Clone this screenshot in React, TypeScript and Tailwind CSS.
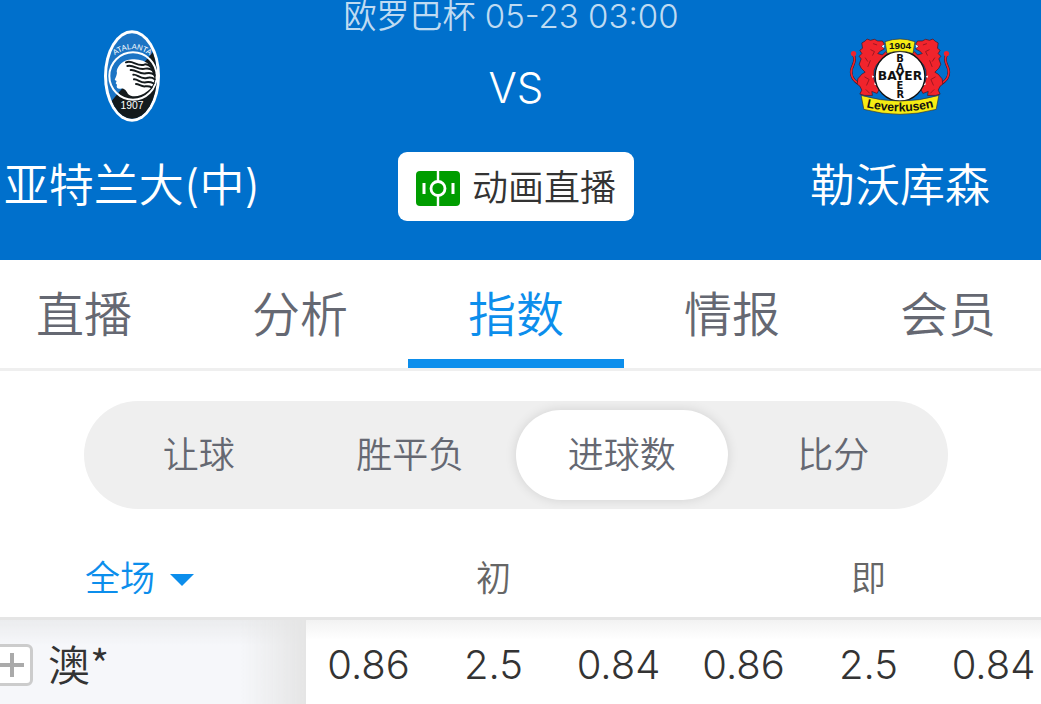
import { useState } from 'react';
import clsx from 'clsx';

const tabs = ['直播', '分析', '指数', '情报', '会员'];
const markets = ['让球', '胜平负', '进球数', '比分'];
const periods = ['全场', '半场'];

const rows = [
  { company: '澳*', early: ['0.86', '2.5', '0.84'], live: ['0.86', '2.5', '0.84'] },
];

function AtalantaLogo() {
  return (
    <svg viewBox="42 30 168 276" className="w-14 h-[92px]" role="img" aria-label="Atalanta">
      <defs>
        <clipPath id="ata-oval">
          <ellipse cx="126" cy="168" rx="75" ry="128" />
        </clipPath>
        <path id="ata-top" d="M64 114 Q126 60 190 114" />
      </defs>
      <ellipse cx="126" cy="168" rx="84" ry="137" fill="#fff" />
      <g clipPath="url(#ata-oval)">
        <rect x="40" y="30" width="172" height="276" fill="#1c74c4" />
        <path d="M212 66 L186 100 L64 244 L50 310 H212 Z" fill="#141a1c" />
      </g>
      <circle cx="129" cy="168" r="71" fill="none" stroke="#fff" strokeWidth="6" />
      <path
        d="M180 136 C166 122 146 116 126 118 C98 120 84 136 80 154 C82 160 80 166 74 180 L80 183 L77 190 L81 194 C78 202 82 207 92 206 C104 204 108 212 114 222 C126 234 152 230 172 214 C186 204 192 190 194 176 Z"
        fill="#fff"
      />
      <g fill="none" stroke="#141a1c" strokeWidth="6" strokeLinecap="round">
        <path d="M108 127 C128 119 140 140 162 134 C172 130 178 136 184 142" />
        <path d="M112 138 C132 132 144 153 166 146 C176 143 184 148 190 152" />
        <path d="M122 150 C138 147 148 165 168 160 C180 157 188 160 194 165" />
        <path d="M130 164 C142 162 150 178 170 174 C182 171 188 173 194 178" />
        <path d="M132 178 C144 177 152 190 168 187 C178 185 184 187 191 190" />
        <path d="M138 192 C148 192 154 201 166 199 C174 198 180 199 185 202" />
      </g>
      <text fontSize="23" fill="#fff" className="font-['Liberation_Sans'] font-normal">
        <textPath href="#ata-top" startOffset="50%" textAnchor="middle">
          ATALANTA
        </textPath>
      </text>
      <text x="126" y="268" fontSize="31" fill="#fff" textAnchor="middle" className="font-['Liberation_Sans'] font-normal">
        1907
      </text>
    </svg>
  );
}

function LeverkusenLion() {
  return (
    <g>
      <path d="M62 176 C38 168 30 146 36 128 C42 112 48 104 41 88" fill="none" stroke="#3a1520" strokeWidth="8" />
      <path d="M62 176 C38 168 30 146 36 128 C42 112 48 104 41 88" fill="none" stroke="#f0242c" strokeWidth="5" />
      <circle cx="41" cy="84" r="8" fill="#f0242c" />
      <path
        d="M66 52 L76 46 L82 40 L92 44 L104 41 L114 46 L128 46 L134 56 L126 62 L134 70 L122 76 L114 84 L128 88 L138 78 L144 84 L136 96 L122 104 L110 118 L103 134 L102 158 L108 178 L118 192 L112 204 L96 198 L98 210 L74 210 L60 206 L66 194 L60 182 L52 176 L54 160 L66 146 L76 140 L64 128 L58 116 L64 100 L58 92 L66 84 L60 74 L68 68 Z"
        fill="#f0242c"
        stroke="#3a1520"
        strokeWidth="2"
      />
      <path
        d="M100 54 L112 58 M92 72 L104 78 L98 90 M76 96 L84 108 M92 104 L84 124 M74 154 L88 162 L80 180 M78 192 L90 204"
        fill="none"
        stroke="#9c1620"
        strokeWidth="3"
      />
      <path d="M126 61 L134 57 L131 67 Z M104 170 L112 180 L104 178 Z M96 150 L103 152 L99 158 Z" fill="#fff" />
    </g>
  );
}

function LeverkusenLogo() {
  return (
    <svg viewBox="28 34 306 238" className="w-[102px] h-[79px]" role="img" aria-label="Bayer Leverkusen">
      <defs>
        <path id="lev-bottom" d="M70 243 Q181 273 292 243" />
      </defs>
      <LeverkusenLion />
      <g transform="translate(362 0) scale(-1 1)">
        <LeverkusenLion />
      </g>
      <circle cx="181" cy="152" r="75" fill="#fff" stroke="#111" strokeWidth="4" />
      <path d="M136 48 Q181 32 226 48 L220 84 Q181 70 142 84 Z" fill="#f6ec13" stroke="#333" strokeWidth="2" />
      <text x="181" y="69" fontSize="30" textAnchor="middle" fill="#111" className="font-['Liberation_Sans'] font-bold">
        1904
      </text>
      <g fontSize="30" textAnchor="middle" fill="#111" className="font-['DejaVu_Sans'] font-bold">
        <text x="181" y="109">B</text>
        <text x="181" y="137">A</text>
        <text x="181" y="191">E</text>
        <text x="182" y="219">R</text>
        <text x="181" y="165" fontSize="37">BAYER</text>
      </g>
      <path
        d="M64 210 Q181 244 298 210 L290 252 Q181 282 72 252 Z"
        fill="#f6ec13"
        stroke="#333"
        strokeWidth="2"
      />
      <text fontSize="37" fill="#111" className="font-['Liberation_Sans'] font-bold">
        <textPath href="#lev-bottom" startOffset="50%" textAnchor="middle">
          Leverkusen
        </textPath>
      </text>
    </svg>
  );
}

function PitchIcon() {
  return (
    <svg viewBox="0 0 44 35" className="w-11 h-[35px]" aria-hidden="true">
      <rect width="44" height="35" rx="4" fill="#009d00" />
      <g fill="none" stroke="#fff">
        <path d="M22 0 V10 M22 25 V35" strokeWidth="2.4" />
        <circle cx="22" cy="17.5" r="7" strokeWidth="2.8" />
        <path d="M8 12 V23 M37 12 V23" strokeWidth="3" />
      </g>
    </svg>
  );
}

function MatchHeader() {
  return (
    <header className="grid grid-cols-[13fr_19fr_13fr] h-[260px] bg-[#0070cc] text-white">
      <div className="flex flex-col items-center pt-[30px]">
        <AtalantaLogo />
        <span className="mt-10 text-[45px] leading-[48px] whitespace-nowrap">亚特兰大(中)</span>
      </div>
      <div className="flex flex-col items-center">
        <span className="pr-[10px] text-[33px] leading-8 text-[#bfdbf2] whitespace-nowrap">欧罗巴杯 05-23 03:00</span>
        <span className="mt-8 text-[42px] leading-[48px]">VS</span>
        <button className="flex items-center gap-3 mt-10 h-[69px] pt-[3px] px-[18px] rounded-[9px] bg-white text-[36px] text-[#333]">
          <PitchIcon />
          动画直播
        </button>
      </div>
      <div className="flex flex-col items-center pt-[30px]">
        <div className="flex items-center h-[92px]">
          <LeverkusenLogo />
        </div>
        <span className="mt-10 text-[45px] leading-[48px] whitespace-nowrap">勒沃库森</span>
      </div>
    </header>
  );
}

export default function App() {
  const [tab, setTab] = useState('指数');
  const [market, setMarket] = useState('进球数');
  const [period, setPeriod] = useState('全场');

  return (
    <div className="overflow-hidden bg-white font-[350] font-['Inter','Noto_Sans_CJK_SC',sans-serif]">
      {/* Content bleeds past both window edges */}
      <div className="-ml-6 -mr-[15px]">
        <MatchHeader />

        <nav className="grid grid-cols-5 h-[111px] border-b-[3px] border-[#efefef]">
          {tabs.map(item => (
            <button
              key={item}
              onClick={() => setTab(item)}
              className={clsx(
                'border-b-9 pt-[10px] text-[48px] leading-none',
                tab === item ? 'border-[#0c8eec] text-[#0c8eec]' : 'border-transparent text-[#656872]'
              )}
            >
              {item}
            </button>
          ))}
        </nav>

        {/* Market switch */}
        <div className="grid grid-cols-4 w-4/5 h-[108px] mx-auto mt-[30px] p-[9px] rounded-full bg-[#efefef]">
          {markets.map(item => (
            <button
              key={item}
              onClick={() => setMarket(item)}
              className={clsx(
                'rounded-full text-[36px] leading-none text-[#656872]',
                market === item && 'bg-white shadow-[0_0_12px_rgba(0,0,0,0.12)]'
              )}
            >
              {item}
            </button>
          ))}
        </div>

        {/* Odds */}
        <table className="w-full mt-7 table-fixed border-collapse text-center">
          <colgroup>
            <col className="w-[330px]" />
            <col span={6} />
          </colgroup>
          <thead>
            <tr className="h-[81px] border-b-[3px] border-[#e5e5e5] text-[35px] text-[#666]">
              <th className="p-0 pt-[3px] font-[350]">
                <label className="flex items-center gap-[14px] pl-[109px] text-[#0c8eec]">
                  <select
                    aria-label="时段"
                    value={period}
                    onChange={(e) => setPeriod(e.target.value)}
                    className="appearance-none bg-transparent outline-none"
                  >
                    {periods.map(item => (
                      <option key={item}>{item}</option>
                    ))}
                  </select>
                  <svg viewBox="0 0 24 12" className="w-6 h-3 mt-1" aria-hidden="true">
                    <path d="M0 0 H24 L12 12 Z" fill="currentColor" />
                  </svg>
                </label>
              </th>
              <th colSpan={3} className="p-0 pt-[3px] font-[350]">初</th>
              <th colSpan={3} className="p-0 pt-[3px] font-[350]">即</th>
            </tr>
          </thead>
          <tbody>
            {rows.map(row => (
              <tr key={row.company} className="h-[88px] bg-linear-to-b from-[#f1f1f1] to-white to-25% text-[40px] text-[#333]">
                <td className="p-0 bg-[#f6f7fa] bg-[linear-gradient(to_right,transparent_80%,#e5e5e5),linear-gradient(#ebecee,transparent_30%)]">
                  <div className="flex items-center gap-[15px] pl-[15px] pt-1">
                    <button
                      aria-label="展开"
                      className="flex items-center justify-center size-[42px] rounded-md border-3 border-[#ccc] bg-white"
                    >
                      <svg viewBox="0 0 24 24" className="size-6" aria-hidden="true">
                        <path d="M12 0 V24 M0 12 H24" stroke="#aaa" strokeWidth="4" />
                      </svg>
                    </button>
                    <span className="pb-1 font-['Noto_Sans_CJK_SC',sans-serif] text-[42px] leading-[60px]">{row.company}</span>
                  </div>
                </td>
                {[...row.early, ...row.live].map((odds, i) => (
                  <td key={i} className="p-0 pt-1">{odds}</td>
                ))}
              </tr>
            ))}
          </tbody>
        </table>
      </div>
    </div>
  );
}
